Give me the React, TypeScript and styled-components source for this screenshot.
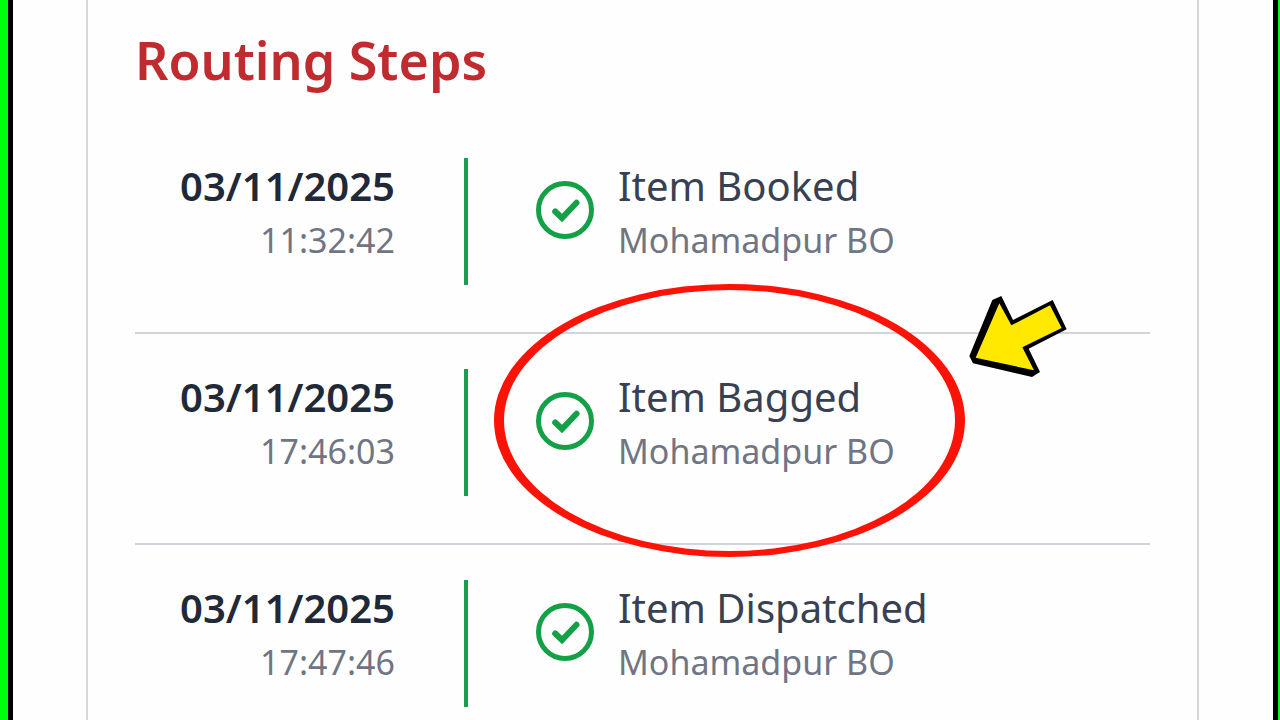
import React from "react";
import styled, { createGlobalStyle } from "styled-components";

const GlobalStyle = createGlobalStyle`
  * { box-sizing: border-box; }
  body {
    margin: 0;
    background: #fefefe;
    font-family: "Noto Sans", "Open Sans", sans-serif;
  }
`;

const GreenFrame = styled.div`
  min-height: 100vh;
  padding: 0 2px 0 8px;
  background: #00ff0c;
`;

const BlackFrame = styled.div`
  min-height: 100vh;
  padding: 0 5px 0 5px;
  background: #000;
`;

const Page = styled.main`
  display: flex;
  min-height: 100vh;
  padding: 0 74px 0 73px;
  background: #fefefe;
`;

const Card = styled.section`
  flex: 1;
  min-width: 0;
  padding: 24px 47px 0;
  border: solid #d6d8de;
  border-width: 0 2px;
`;

const Heading = styled.h1`
  margin: 0 0 27px;
  font-size: 52px;
  line-height: 72px;
  font-weight: 600;
  color: #bf2b2e;
`;

const Steps = styled.ol`
  margin: 0;
  padding: 0;
  list-style: none;
`;

const Step = styled.li`
  display: grid;
  grid-template-columns: 260px 4px 1fr;
  column-gap: 68px;
  padding: 35px 0 47px;
  border-bottom: 2px solid #d1d5db;

  &:last-child {
    padding-bottom: 0;
    border-bottom: 0;
  }
`;

const When = styled.time`
  display: flex;
  flex-direction: column;
  text-align: right;
`;

const Bar = styled.div`
  height: 127px;
  margin-left: 1px;
  width: 4px;
  background: #1b9d4e;
`;

const Details = styled.div`
  position: relative;
  display: flex;
  align-items: flex-start;
  gap: 24px;
  margin-left: 1px;
`;

const Line = styled.span<{ $tone: "date" | "title" | "muted" }>`
  display: block;
  white-space: nowrap;
  line-height: ${(p) => (p.$tone === "muted" ? 52 : 56)}px;
  font-size: ${(p) => (p.$tone === "muted" ? 34 : 40)}px;
  font-weight: ${(p) => (p.$tone === "date" ? 600 : 400)};
  color: ${(p) => ({ date: "#1f2937", title: "#374151", muted: "#6f7583" })[p.$tone]};
`;

const StatusIcon = styled.svg`
  flex: none;
  width: 58px;
  height: 58px;
  margin-top: 23px;
`;

const Ring = styled.div`
  position: absolute;
  left: -42px;
  top: -85px;
  width: 471px;
  height: 273px;
  border: solid #fb1307;
  border-width: 6px 10px;
  border-radius: 50%;
  pointer-events: none;
`;

const Arrow = styled.svg`
  position: absolute;
  left: 432px;
  top: -76px;
  width: 100px;
  height: 86px;
`;

const CheckCircle = () => (
  <StatusIcon viewBox="0 0 58 58" fill="none" stroke="#14a046" aria-hidden="true">
    <circle cx="29" cy="29" r="26.5" strokeWidth="5" />
    <path d="M19.2 30.5L26 37L40.5 21.7" strokeWidth="6" strokeLinecap="round" strokeLinejoin="miter" />
  </StatusIcon>
);

const Highlight = () => (
  <>
    <Ring />
    <Arrow viewBox="54 39 300 258" aria-hidden="true">
      <polygon
        fill="#000"
        points="58,228 127,60 154,48 189,120 308,60 350,148 236,206 270,276 246,291 69,250"
      />
      <polygon fill="#ffe900" points="77,233 148,70 184,136 300,76 335,144 217,202 252,271" />
    </Arrow>
  </>
);

const steps = [
  { date: "03/11/2025", time: "11:32:42", title: "Item Booked", place: "Mohamadpur BO" },
  { date: "03/11/2025", time: "17:46:03", title: "Item Bagged", place: "Mohamadpur BO", highlighted: true },
  { date: "03/11/2025", time: "17:47:46", title: "Item Dispatched", place: "Mohamadpur BO" },
];

export default function App() {
  return (
    <GreenFrame>
      <GlobalStyle />
      <BlackFrame>
        <Page>
          <Card>
            <Heading>Routing Steps</Heading>
            <Steps>
              {steps.map((s) => (
                <Step key={s.time}>
                  <When>
                    <Line $tone="date">{s.date}</Line>
                    <Line $tone="muted">{s.time}</Line>
                  </When>
                  <Bar />
                  <Details>
                    <CheckCircle />
                    <div>
                      <Line $tone="title">{s.title}</Line>
                      <Line $tone="muted">{s.place}</Line>
                    </div>
                    {s.highlighted && <Highlight />}
                  </Details>
                </Step>
              ))}
            </Steps>
          </Card>
        </Page>
      </BlackFrame>
    </GreenFrame>
  );
}
